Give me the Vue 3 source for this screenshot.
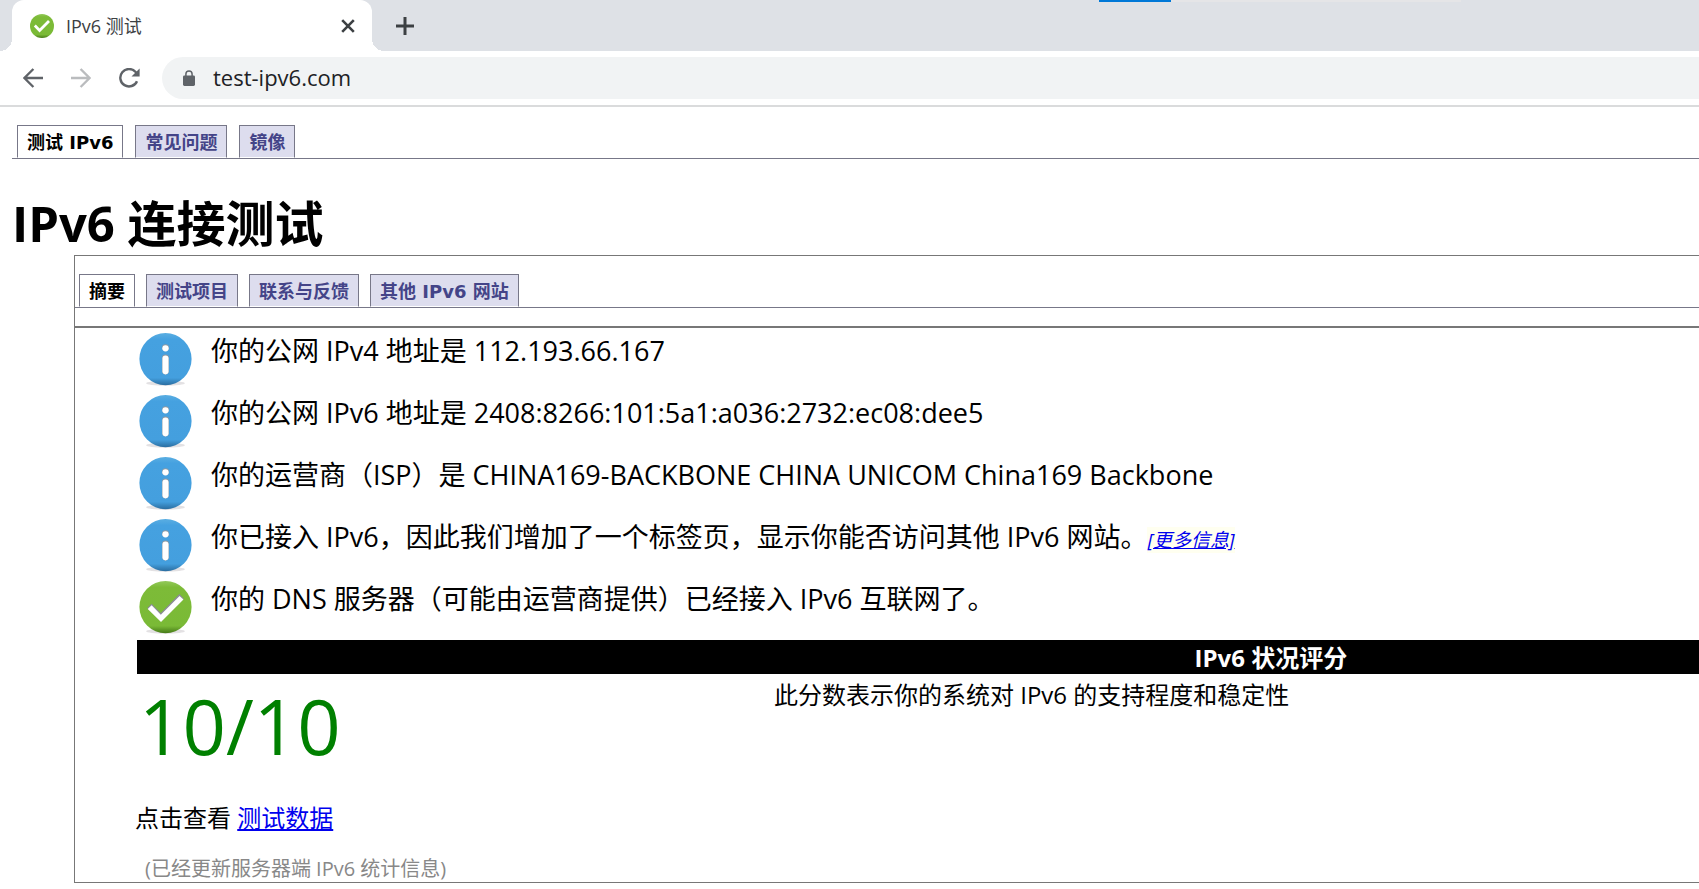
<script setup>
const siteTabs = ['测试 IPv6', '常见问题', '镜像']
const panelTabs = ['摘要', '测试项目', '联系与反馈', '其他 IPv6 网站']
const results = [
  { kind: 'info', text: '你的公网 IPv4 地址是 112.193.66.167' },
  { kind: 'info', text: '你的公网 IPv6 地址是 2408:8266:101:5a1:a036:2732:ec08:dee5' },
  { kind: 'info', text: '你的运营商（ISP）是 CHINA169-BACKBONE CHINA UNICOM China169 Backbone' },
  { kind: 'info', text: '你已接入 IPv6，因此我们增加了一个标签页，显示你能否访问其他 IPv6 网站。', more: '[更多信息]' },
  { kind: 'ok', text: '你的 DNS 服务器（可能由运营商提供）已经接入 IPv6 互联网了。' },
]
</script>

<template>
  <div class="window" lang="zh-CN">
    <svg class="defs" width="0" height="0" aria-hidden="true">
      <defs>
        <linearGradient id="blueDisc" x1="0" y1="0" x2="0" y2="1">
          <stop offset="0" stop-color="#5aaee2" />
          <stop offset="0.12" stop-color="#45a1e0" />
          <stop offset="0.86" stop-color="#449fde" />
          <stop offset="1" stop-color="#2a6da0" />
        </linearGradient>
        <linearGradient id="greenDisc" x1="0" y1="0" x2="0" y2="1">
          <stop offset="0" stop-color="#93c95b" />
          <stop offset="0.12" stop-color="#7dbb38" />
          <stop offset="0.86" stop-color="#7aba36" />
          <stop offset="1" stop-color="#467a18" />
        </linearGradient>
      </defs>
    </svg>

    <header>
      <div class="strip">
        <div class="progress"><span></span></div>
        <div class="tab">
          <svg class="favicon" viewBox="0 0 24 24">
            <circle cx="12" cy="12" r="12" fill="url(#greenDisc)" />
            <path d="M4.8 11.6l4.8 4.8 9.4-9.4" fill="none" stroke="#fff" stroke-width="2.8" />
          </svg>
          <span class="tab-title">IPv6 测试</span>
          <button class="close" aria-label="关闭">
            <svg width="14" height="14" viewBox="0 0 14 14"><path d="M1.2 1.2l11.6 11.6M12.8 1.2L1.2 12.8" stroke="#3c4043" stroke-width="2.6" /></svg>
          </button>
        </div>
        <button class="plus" aria-label="新标签页">
          <svg width="18" height="18" viewBox="0 0 18 18"><path d="M9 0v18M0 9h18" stroke="#3c4043" stroke-width="3" /></svg>
        </button>
      </div>
      <div class="toolbar">
        <button aria-label="后退">
          <svg width="20" height="20" viewBox="0 0 20 20"><path d="M20 10H1.6M10.4 1L1.4 10l9 9" fill="none" stroke="#5f6368" stroke-width="2.4" /></svg>
        </button>
        <button aria-label="前进">
          <svg width="20" height="20" viewBox="0 0 20 20"><path d="M0 10h18.4M9.6 1l9 9-9 9" fill="none" stroke="#babcbe" stroke-width="2.4" /></svg>
        </button>
        <button aria-label="重新加载">
          <svg width="21" height="20" viewBox="0 0 21 20"><path d="M18 13.2A8.7 8.7 0 1 1 16.4 3.8L17.8 5.4" fill="none" stroke="#5f6368" stroke-width="2.4" /><path d="M20.6 0.5V8.6H12.5z" fill="#5f6368" /></svg>
        </button>
        <label class="omnibox">
          <svg width="12" height="16" viewBox="0 0 12 16"><rect y="5.4" width="12" height="10.6" rx="1.4" fill="#5f6368" /><path d="M2.9 6V4a3.1 3.1 0 0 1 6.2 0v2" fill="none" stroke="#5f6368" stroke-width="1.5" /></svg>
          <input type="text" value="test-ipv6.com" aria-label="地址栏" spellcheck="false">
        </label>
      </div>
    </header>

    <main>
      <nav class="tabs site-tabs">
        <a v-for="(t, i) in siteTabs" :key="t" href="#" :class="{ active: i === 0 }">{{ t }}</a>
      </nav>
      <h1>IPv6 连接测试</h1>

      <section class="panel">
        <nav class="tabs panel-tabs">
          <a v-for="(t, i) in panelTabs" :key="t" href="#" :class="{ active: i === 0 }">{{ t }}</a>
        </nav>
        <div class="body">
          <ul>
            <li v-for="r in results" :key="r.text">
              <svg class="mark" viewBox="0 0 52 52">
                <ellipse cx="26" cy="49.4" rx="19" ry="2.4" fill="#e3e1e3" />
                <circle cx="26" cy="25.6" r="25.6" :fill="r.kind === 'info' ? 'url(#blueDisc)' : 'url(#greenDisc)'" />
                <template v-if="r.kind === 'info'">
                  <circle cx="26" cy="14.4" r="3.4" fill="#8f9aa3" />
                  <circle cx="26" cy="15" r="3.1" fill="#fff" />
                  <rect x="22.6" y="21" width="6.8" height="19.6" rx="3.4" fill="#8f9aa3" />
                  <rect x="23" y="22" width="6" height="18.6" rx="3" fill="#fff" />
                </template>
                <template v-else>
                  <path d="M8 26.6l4.4-4.4 9 9.2L39.6 12.8l4.4 4.6L21.6 39.6z" fill="#8b8c96" />
                  <path d="M8.6 27.4l3.8-3.6 9 9.2L39.8 14.6l3.8 3.6L21.6 40.2z" fill="#fff" />
                </template>
              </svg>
              <span>{{ r.text }}<a v-if="r.more" class="more" href="#">{{ r.more }}</a></span>
            </li>
          </ul>

          <table>
            <colgroup>
              <col class="col-score">
              <col>
            </colgroup>
            <thead>
              <tr><th colspan="2">IPv6 状况评分</th></tr>
            </thead>
            <tbody>
              <tr>
                <td class="score">10/10</td>
                <td class="desc">此分数表示你的系统对 IPv6 的支持程度和稳定性</td>
              </tr>
            </tbody>
          </table>

          <p class="data">点击查看 <a href="#">测试数据</a></p>
          <p class="note">(已经更新服务器端 IPv6 统计信息)</p>
        </div>
      </section>
    </main>
  </div>
</template>

<style>
body {
  margin: 0;
  background: #fff;
}
</style>

<style scoped>
* {
  box-sizing: border-box;
}
.window {
  font-family: "Open Sans", "Noto Sans CJK SC", sans-serif;
  color: #000;
  overflow: hidden;
}
.defs {
  position: absolute;
}
svg {
  display: block;
  flex: none;
}
button {
  border: 0;
  padding: 0;
  background: none;
}
.strip {
  position: relative;
  display: flex;
  height: 51px;
  padding-left: 12px;
  background: #dee1e6;
}
.progress {
  position: absolute;
  top: 0;
  left: 1099px;
  width: 362px;
  height: 2px;
  background: #e5e5e7;
}
.progress span {
  display: block;
  width: 20%;
  height: 2px;
  background: #0078d7;
}
.tab {
  position: relative;
  display: flex;
  align-items: center;
  width: 360px;
  padding: 0 17px 0 18px;
  background: #fff;
  border-radius: 12px 12px 0 0;
}
.tab::before,
.tab::after {
  content: "";
  position: absolute;
  bottom: 0;
  width: 12px;
  height: 12px;
}
.tab::before {
  right: 100%;
  background: radial-gradient(circle at 0 0, #dee1e6 12px, #fff 12px);
}
.tab::after {
  left: 100%;
  background: radial-gradient(circle at 100% 0, #dee1e6 12px, #fff 12px);
}
.favicon {
  width: 24px;
  height: 24px;
}
.tab-title {
  flex: 1;
  margin-left: 12px;
  font-size: 18px;
  line-height: 24px;
  color: #3c4043;
}
.plus {
  margin-left: 24px;
}
.toolbar {
  display: flex;
  align-items: center;
  gap: 28px;
  height: 56px;
  padding-left: 23px;
  border-bottom: 2px solid #dadbdc;
}
.omnibox {
  display: flex;
  flex: 1;
  align-items: center;
  height: 42px;
  margin-left: -6px;
  padding-left: 21px;
  gap: 18px;
  background: #f1f3f4;
  border-radius: 21px 0 0 21px;
}
.omnibox input {
  flex: 1;
  min-width: 0;
  padding: 0 0 2px;
  border: 0;
  outline: 0;
  background: none;
  font: 22px/30px "Open Sans", "Noto Sans CJK SC", sans-serif;
  color: #202124;
}
main {
  padding: 18px 0 0 12px;
}
.tabs {
  display: flex;
  gap: 12px;
  padding-left: 5px;
  border-bottom: 1px solid #778;
  font: bold 18px/29px "DejaVu Sans", "Noto Sans CJK SC", sans-serif;
}
.tabs a {
  padding: 2px 9px 0;
  border: 1px solid #778;
  border-bottom-color: #fff;
  background: #dde;
  color: #448;
  text-decoration: none;
  white-space: nowrap;
}
.tabs .active {
  background: #fff;
  color: #000;
}
h1 {
  margin: 33px 0 0;
  font-size: 49px;
  line-height: 63px;
}
.panel {
  margin-left: 62px;
  border: 1px solid #777;
  border-right: 0;
}
.tabs.panel-tabs {
  gap: 11px;
  margin-top: 18px;
  padding-left: 4px;
}
.body {
  margin-top: 18px;
  padding: 2px 0 1px 60px;
  border-top: 2px solid #777;
}
ul {
  margin: 0;
  padding: 0 0 0 4px;
  list-style: none;
}
li {
  display: flex;
  gap: 19px;
  height: 62px;
  font-size: 27px;
  line-height: 42px;
  white-space: nowrap;
}
.mark {
  width: 53px;
  height: 53px;
  margin-top: 3px;
}
.more {
  background: #fffff0;
  font-size: 19px;
  font-style: italic;
}
a {
  color: #0000ee;
}
/* The table runs on past the right edge of the window. */
table {
  width: 145%;
  margin-left: 2px;
  border-spacing: 0;
  table-layout: fixed;
  font-size: 24px;
}
.col-score {
  width: 28%;
}
th {
  padding: 1px 0 0;
  background: #000;
  color: #fff;
  line-height: 33px;
}
td {
  padding: 0;
  vertical-align: top;
}
.score {
  padding: 1px 0 0 2px;
  color: #008000;
  font-size: 76px;
  line-height: 101px;
}
.desc {
  padding: 1px 0 0 2px;
  line-height: 40px;
}
p {
  margin: 0;
}
.data {
  margin-top: 22px;
  font-size: 24px;
  line-height: 40px;
}
.note {
  margin-top: 19px;
  padding-left: 10px;
  font-size: 20px;
  line-height: 24px;
  color: #888;
}
</style>
